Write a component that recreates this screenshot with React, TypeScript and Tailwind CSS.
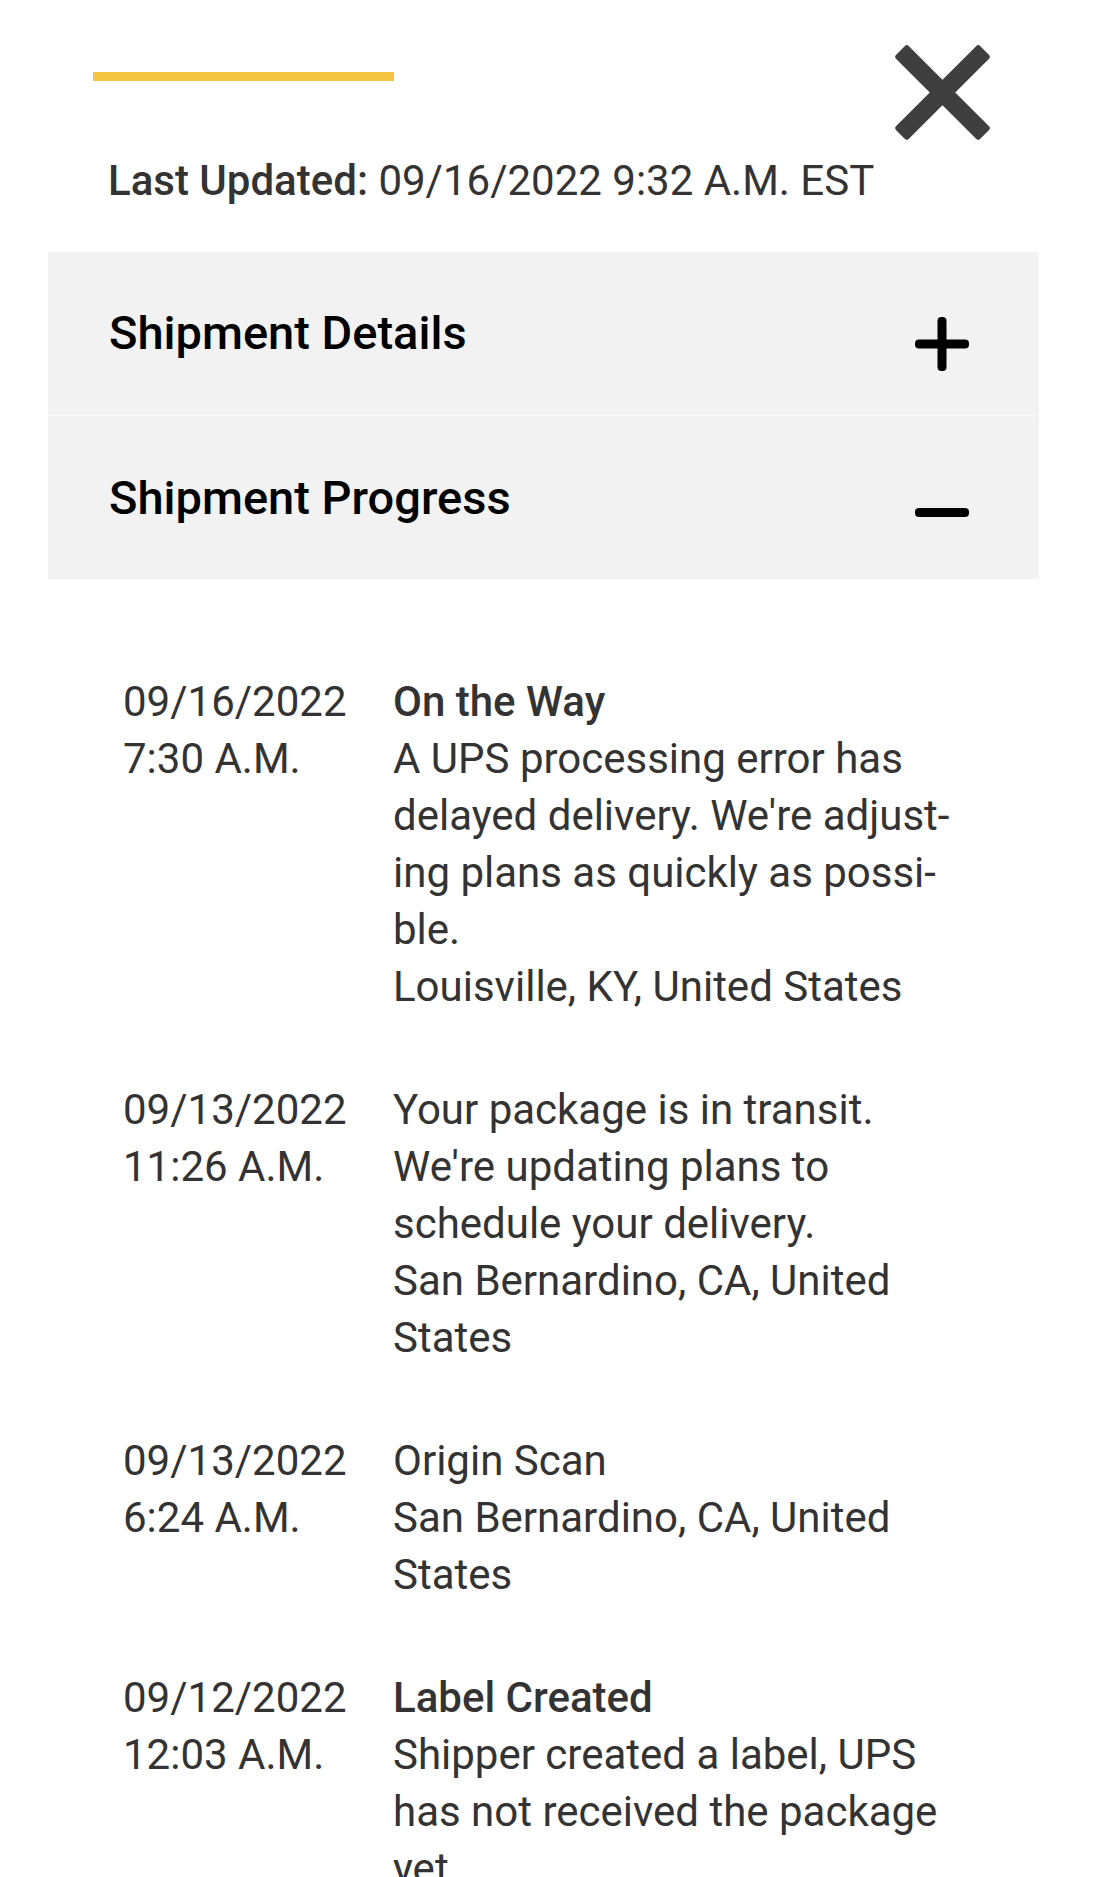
import React from "react";

// tracking events, newest first
const EVENTS = [
  {
    date: "09/16/2022",
    time: "7:30 A.M.",
    title: "On the Way",
    lines: [
      "A UPS processing error has delayed delivery. We're adjust\u00ADing plans as quickly as possi\u00ADble.",
      "Louisville, KY, United States",
    ],
  },
  {
    date: "09/13/2022",
    time: "11:26 A.M.",
    lines: [
      "Your package is in transit. We're updating plans to schedule your delivery.",
      "San Bernardino, CA, United States",
    ],
  },
  {
    date: "09/13/2022",
    time: "6:24 A.M.",
    lines: ["Origin Scan", "San Bernardino, CA, United States"],
  },
  {
    date: "09/12/2022",
    time: "12:03 A.M.",
    title: "Label Created",
    lines: ["Shipper created a label, UPS has not received the package yet."],
  },
];

function CloseIcon() {
  return (
    <svg width="97" height="97" viewBox="0 0 97 97" className="shrink-0">
      <rect x="-11" y="39.5" width="119" height="18" rx="3" fill="#3f3f3f" transform="rotate(45 48.5 48.5)" />
      <rect x="-11" y="39.5" width="119" height="18" rx="3" fill="#3f3f3f" transform="rotate(-45 48.5 48.5)" />
    </svg>
  );
}

function PlusIcon() {
  return (
    <svg width="54" height="54" viewBox="0 0 54 54" className="mt-[22px] shrink-0">
      <rect x="0" y="22.5" width="54" height="9" rx="4" fill="#000" />
      <rect x="22.5" y="0" width="9" height="54" rx="4" fill="#000" />
    </svg>
  );
}

function MinusIcon() {
  return (
    <svg width="54" height="9" viewBox="0 0 54 9" className="mt-[28px] shrink-0">
      <rect x="0" y="0" width="54" height="9" rx="4" fill="#000" />
    </svg>
  );
}

function Section({ label, open }: { label: string; open?: boolean }) {
  return (
    <div className="flex h-[162px] items-center justify-between bg-[#f2f2f2] pl-[61px] pr-[70px]">
      <span className="text-[47px] leading-[56px] font-medium text-black">{label}</span>
      {open ? <MinusIcon /> : <PlusIcon />}
    </div>
  );
}

export default function App() {
  return (
    <div className="min-h-[1877px] w-[1093px] overflow-hidden bg-white font-['Roboto',sans-serif] text-[#333]">
      {/* top bar */}
      <div className="flex items-start justify-between pt-[44px] pl-[93px] pr-[102px]">
        <div className="mt-[28px] h-[9px] w-[301px] bg-[#f4c542]" />
        <CloseIcon />
      </div>

      <p className="mt-[11px] pl-[108px] text-[42px] leading-[57px]">
        <span className="font-medium">Last Updated:</span> 09/16/2022 9:32 A.M. EST
      </p>

      <div className="mt-[43px] ml-[48px] mr-[54px]">
        <Section label="Shipment Details" />
        <div className="h-[3px] bg-[#f7f7f7]" />
        <Section label="Shipment Progress" open />
      </div>

      {/* progress list */}
      <div className="mt-[94px] flex flex-col gap-[66px] pl-[123px]">
        {EVENTS.map((ev, i) => (
          <div key={i} className="flex text-[42px] leading-[57px]">
            <div className="w-[270px] shrink-0">
              <div>{ev.date}</div>
              <div>{ev.time}</div>
            </div>
            <div className="w-[585px]">
              {ev.title && <div className="font-medium">{ev.title}</div>}
              {ev.lines.map((l, j) => (
                <div key={j}>{l}</div>
              ))}
            </div>
          </div>
        ))}
      </div>
    </div>
  );
}
